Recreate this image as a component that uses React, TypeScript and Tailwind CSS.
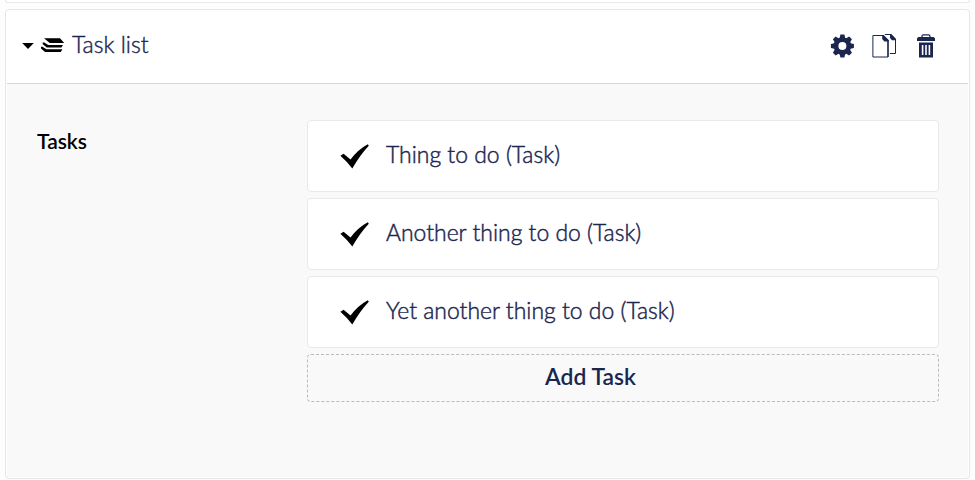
const TASKS = ["Thing to do", "Another thing to do", "Yet another thing to do"];

function StackIcon() {
  return (
    <svg className="ml-[7px] block h-[15px] w-6 shrink-0" viewBox="0 0 24 15" fill="#000">
      <path d="M3 .3h16L23.2 5H8.8zM3.2 4.4 7.2 7H22L20.4 9.4H5.8L1.8 6.2 1.6 4.4zM1.4 8.8 5.4 11.3H21.4L19.8 14H4L0 10.6V8.8z" />
    </svg>
  );
}

function GearIcon() {
  const teeth = [0, 45, 90, 135, 180, 225, 270, 315];
  return (
    <svg className="block h-6 w-6" viewBox="-.4 0 24 24">
      <g fill="#1b264f">
        {teeth.map((a) => (
          <path key={a} d="M9 5 10 .5h4L15 5z" transform={`rotate(${a} 12 12)`} />
        ))}
      </g>
      <circle cx="12" cy="12" r="6.4" fill="none" stroke="#1b264f" strokeWidth="4.8" />
    </svg>
  );
}

function CopyIcon() {
  return (
    <svg className="block h-6 w-6" viewBox="-.4 0 24 24" fill="none" stroke="#1b264f">
      <path d="M.5 1.5h10.5l4.6 4.6v16.9H.5z" />
      <path d="M15.6 6v17" strokeWidth="1.3" />
      <path d="M9.8 1h1.4l5 5v1.5H12L9.8 5z" fill="#1b264f" stroke="none" />
      <path d="M12.5.5h6l4.6 4.6v14.4H17.5" />
      <path d="M17.6 0h1.2l4.8 5v1.2H19.6L17.6 4z" fill="#1b264f" stroke="none" />
    </svg>
  );
}

function TrashIcon() {
  return (
    <svg className="block h-6 w-[18px]" viewBox="0 0 18 24" fill="#1b264f">
      <path d="M5 3.5V2.2Q5 .8 6.4.8h5.2Q13 .8 13 2.2v1.3" fill="none" stroke="#1b264f" strokeWidth="1.3" />
      <path d="M1.5 3h15L18 4.3V7H0V4.3z" />
      <path fillRule="evenodd" d="M2 8.5h14V23.5H2zM4.8 11v10h1.6V11zM8.2 11v10h1.6V11zM11.6 11v10h1.6V11z" />
    </svg>
  );
}

function CheckIcon() {
  return (
    <svg className="block h-[25px] w-[29px] shrink-0" viewBox="0 0 29 25" fill="#000">
      <path d="M.4 11.7 3.6 9.8L10.5 15.6Q18 5.5 27.8.3L28.8 1.7Q20 11 12.3 24.5Q7 17.5 .4 11.7z" />
    </svg>
  );
}

export default function App() {
  return (
    <div className="flex h-[480px] w-[975px] flex-col overflow-hidden bg-[#fdfdfd] pl-[5px] font-['Lato',sans-serif] text-[#1b264f]">
      <div className="h-[3px] w-[965px] shrink-0 rounded-b-[4px] border border-t-0 border-[#e9e9e9] bg-white" />
      <section className="mt-[6px] flex h-[470px] w-[965px] shrink-0 flex-col rounded-[4px] border border-[#e6e6e6] bg-white p-px">
        <header className="flex h-[73px] shrink-0 items-center border-b border-[#d8d8d8] pb-[3px] pl-[15px] pr-[33px]">
          <svg className="block h-[6px] w-3 shrink-0" viewBox="0 0 12 6">
            <path d="M.2 0h11.6L6 6z" fill="#000" />
          </svg>
          <StackIcon />
          <h2 className="ml-[7px] pb-1 text-[23px] font-light leading-7 [-webkit-text-stroke:0.4px_#1b264f]">Task list</h2>
          <div className="ml-auto flex items-center gap-[18px]">
            <GearIcon />
            <CopyIcon />
            <span className="ml-[3px]"><TrashIcon /></span>
          </div>
        </header>
        <div className="flex grow bg-[#f9f9f9] pl-[30px] pr-[29px] pt-9">
          <h3 className="w-[270px] shrink-0 pt-[7px] text-[21px] font-semibold leading-7 text-black">Tasks</h3>
          <div className="flex grow flex-col gap-[6px]">
            {TASKS.map((task) => (
              <div key={task} className="flex h-[72px] items-center rounded-[4px] border border-[#e9e9e9] bg-white pl-8">
                <CheckIcon />
                <span className="ml-[17px] pb-1 text-[22.95px] font-light leading-7 [-webkit-text-stroke:0.45px_#1b264f]">{task} (Task)</span>
              </div>
            ))}
            <button className="h-12 rounded-[4px] border border-dashed border-[#bbb] pb-1 pr-[65px] text-[22.9px] font-semibold leading-7">
              Add Task
            </button>
          </div>
        </div>
      </section>
    </div>
  );
}
